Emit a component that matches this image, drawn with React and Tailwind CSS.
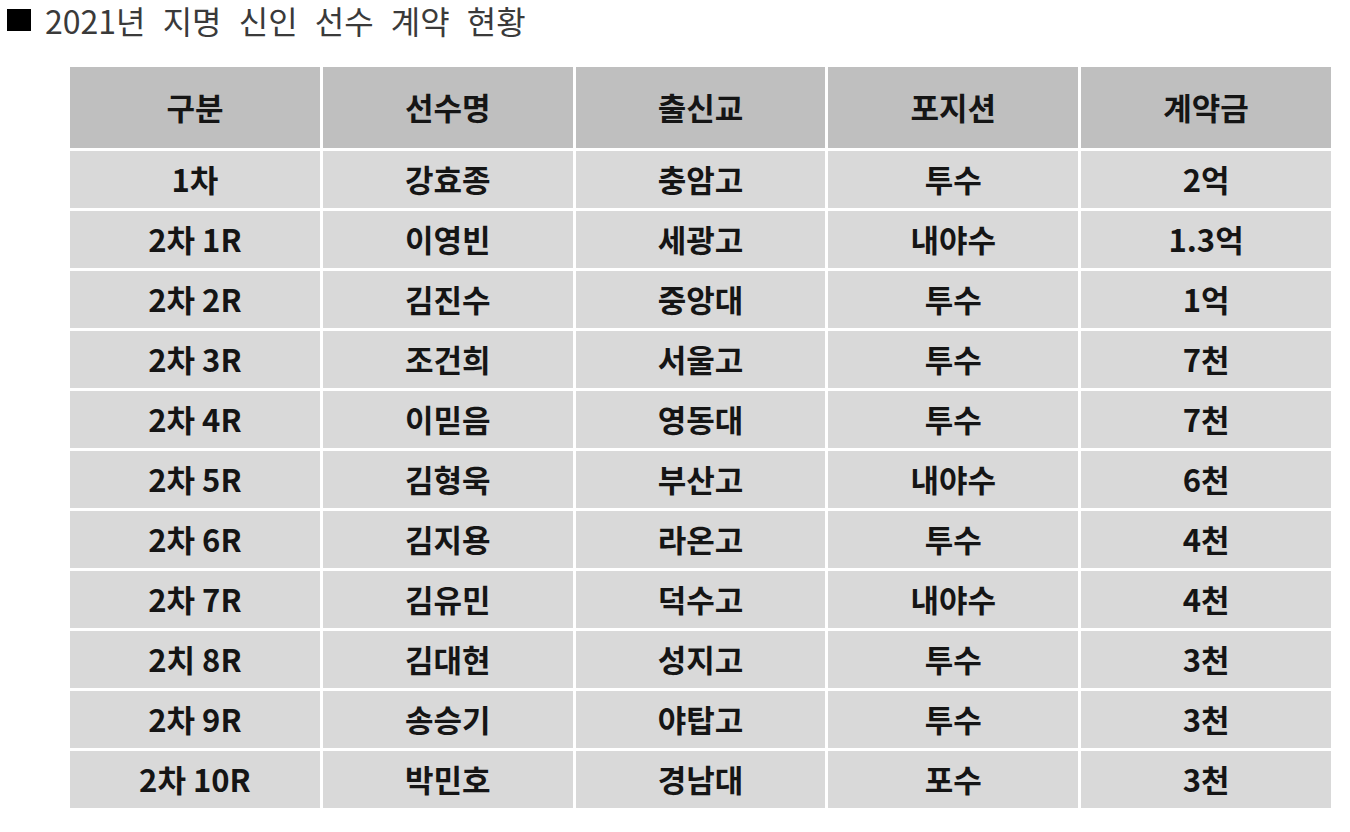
import React from "react";

const header = ["구분", "선수명", "출신교", "포지션", "계약금"];
const rows = [
  ["1차", "강효종", "충암고", "투수", "2억"],
  ["2차 1R", "이영빈", "세광고", "내야수", "1.3억"],
  ["2차 2R", "김진수", "중앙대", "투수", "1억"],
  ["2차 3R", "조건희", "서울고", "투수", "7천"],
  ["2차 4R", "이믿음", "영동대", "투수", "7천"],
  ["2차 5R", "김형욱", "부산고", "내야수", "6천"],
  ["2차 6R", "김지용", "라온고", "투수", "4천"],
  ["2차 7R", "김유민", "덕수고", "내야수", "4천"],
  ["2치 8R", "김대현", "성지고", "투수", "3천"],
  ["2차 9R", "송승기", "야탑고", "투수", "3천"],
  ["2차 10R", "박민호", "경남대", "포수", "3천"],
];

const font = { fontFamily: '"Noto Sans CJK KR", "Noto Sans", sans-serif' };

export default function App() {
  return (
    <div className="w-[1350px] h-[832px] bg-white overflow-hidden" style={font}>
      <div className="flex items-center pl-[7px] gap-[14px]">
        <div className="w-[24px] h-[22px] bg-black shrink-0" />
        <span className="text-[32px] leading-[40px] text-[#3a3a3a] [word-spacing:10px] whitespace-nowrap">
          2021년 지명 신인 선수 계약 현황
        </span>
      </div>
      <div className="ml-[70px] mt-[27px] w-[1261px] flex flex-col gap-[3px]">
        <div className="grid grid-cols-5 gap-[3px] h-[81px]">
          {header.map((h) => (
            <div
              key={h}
              className="bg-[#bfbfbf] flex items-center justify-center text-[31px] font-bold text-[#151515]"
            >
              {h}
            </div>
          ))}
        </div>
        {rows.map((r, i) => (
          <div key={i} className="grid grid-cols-5 gap-[3px] h-[57px]">
            {r.map((c, j) => (
              <div
                key={j}
                className="bg-[#d9d9d9] flex items-center justify-center text-[31px] font-bold text-[#151515]"
              >
                {c}
              </div>
            ))}
          </div>
        ))}
      </div>
    </div>
  );
}
